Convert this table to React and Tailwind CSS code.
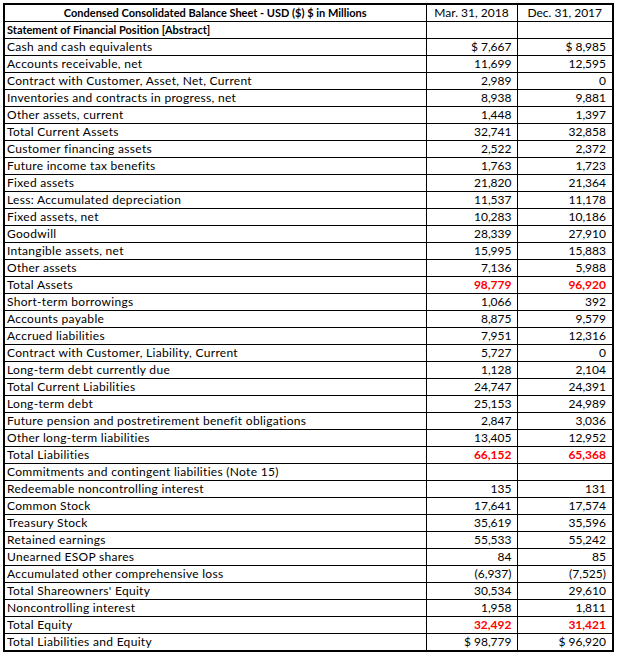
import React from "react";

const rows = [
  ["Statement of Financial Position [Abstract]", "", "", "head"],
  ["Cash and cash equivalents", "$ 7,667", "$ 8,985"],
  ["Accounts receivable, net", "11,699", "12,595"],
  ["Contract with Customer, Asset, Net, Current", "2,989", "0"],
  ["Inventories and contracts in progress, net", "8,938", "9,881"],
  ["Other assets, current", "1,448", "1,397"],
  ["Total Current Assets", "32,741", "32,858"],
  ["Customer financing assets", "2,522", "2,372"],
  ["Future income tax benefits", "1,763", "1,723"],
  ["Fixed assets", "21,820", "21,364"],
  ["Less: Accumulated depreciation", "11,537", "11,178"],
  ["Fixed assets, net", "10,283", "10,186"],
  ["Goodwill", "28,339", "27,910"],
  ["Intangible assets, net", "15,995", "15,883"],
  ["Other assets", "7,136", "5,988"],
  ["Total Assets", "98,779", "96,920", "red"],
  ["Short-term borrowings", "1,066", "392"],
  ["Accounts payable", "8,875", "9,579"],
  ["Accrued liabilities", "7,951", "12,316"],
  ["Contract with Customer, Liability, Current", "5,727", "0"],
  ["Long-term debt currently due", "1,128", "2,104"],
  ["Total Current Liabilities", "24,747", "24,391"],
  ["Long-term debt", "25,153", "24,989"],
  ["Future pension and postretirement benefit obligations", "2,847", "3,036"],
  ["Other long-term liabilities", "13,405", "12,952"],
  ["Total Liabilities", "66,152", "65,368", "red"],
  ["Commitments and contingent liabilities (Note 15)", "", ""],
  ["Redeemable noncontrolling interest", "135", "131"],
  ["Common Stock", "17,641", "17,574"],
  ["Treasury Stock", "35,619", "35,596"],
  ["Retained earnings", "55,533", "55,242"],
  ["Unearned ESOP shares", "84", "85"],
  ["Accumulated other comprehensive loss", "(6,937)", "(7,525)"],
  ["Total Shareowners' Equity", "30,534", "29,610"],
  ["Noncontrolling interest", "1,958", "1,811"],
  ["Total Equity", "32,492", "31,421", "red"],
  ["Total Liabilities and Equity", "$ 98,779", "$ 96,920"],
];

const BalanceSheet = () => {
  return (
    <div className="bg-white w-[617px] h-[654px] pt-[3px] pl-[3px] font-['Lato',sans-serif] text-[12px] leading-[16px] text-black">
      <table className="border-collapse border-2 border-black table-fixed w-[611px]">
        <colgroup>
          <col className="w-[422px]" />
          <col className="w-[91px]" />
          <col className="w-[96px]" />
        </colgroup>
        <thead>
          <tr>
            <th className="border border-black font-bold text-[11px] text-center p-0 h-[16px]">
              Condensed Consolidated Balance Sheet - USD ($) $ in Millions
            </th>
            <th className="border border-black font-normal text-center p-0">Mar. 31, 2018</th>
            <th className="border border-black font-normal text-center p-0">Dec. 31, 2017</th>
          </tr>
        </thead>
        <tbody>
          {rows.map(([label, a, b, kind], i) => (
            <tr key={i}>
              <td
                className={`border border-black p-0 pl-[2px] h-[16px] whitespace-nowrap ${
                  kind === "head" ? "font-bold text-[11px]" : "tracking-[0.3px]"
                }`}
              >
                {label}
              </td>
              <td className={`border border-black p-0 pr-[5px] text-right ${kind === "red" ? "text-[#ff0000] font-bold" : ""}`}>
                {a}
              </td>
              <td className={`border border-black p-0 pr-[6px] text-right ${kind === "red" ? "text-[#ff0000] font-bold" : ""}`}>
                {b}
              </td>
            </tr>
          ))}
        </tbody>
      </table>
    </div>
  );
};

export default BalanceSheet;
